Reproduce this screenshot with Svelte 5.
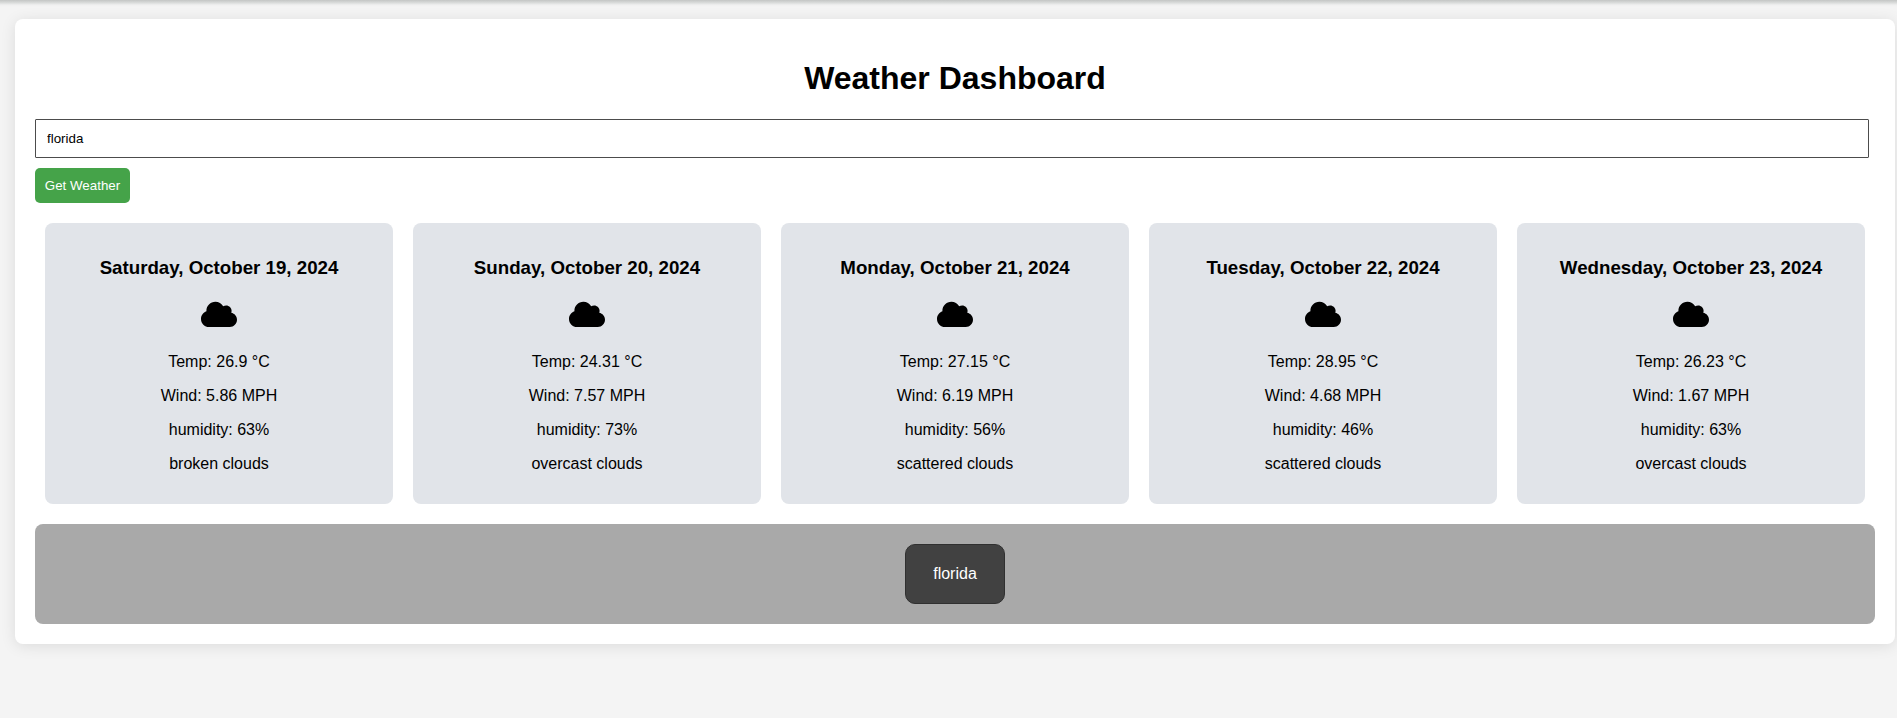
<script>
  const days = [
    { date: 'Saturday, October 19, 2024', temp: '26.9', wind: '5.86', humidity: 63, sky: 'broken clouds' },
    { date: 'Sunday, October 20, 2024', temp: '24.31', wind: '7.57', humidity: 73, sky: 'overcast clouds' },
    { date: 'Monday, October 21, 2024', temp: '27.15', wind: '6.19', humidity: 56, sky: 'scattered clouds' },
    { date: 'Tuesday, October 22, 2024', temp: '28.95', wind: '4.68', humidity: 46, sky: 'scattered clouds' },
    { date: 'Wednesday, October 23, 2024', temp: '26.23', wind: '1.67', humidity: 63, sky: 'overcast clouds' }
  ];
  let city = $state('florida');
  let history = $state(['florida']);
</script>

<div class="page">
  <main class="container">
    <h1>Weather Dashboard</h1>
    <input type="text" bind:value={city} aria-label="City" />
    <button class="search">Get Weather</button>
    <section class="forecast">
      {#each days as day}
        <article class="card">
          <h3>{day.date}</h3>
          <div class="icon">
            <svg viewBox="0 0 640 512" width="36" height="28.8" aria-hidden="true">
              <path d="M0 336c0 79.5 64.5 144 144 144H512c70.7 0 128-57.3 128-128c0-61.9-44-113.6-102.4-125.4c4.1-10.7 6.4-22.4 6.4-34.6c0-53-43-96-96-96c-19.7 0-38.1 6-53.3 16.2C367 64.2 315.3 32 256 32C167.6 32 96 103.6 96 192c0 2.7 .1 5.4 .2 8.1C40.2 219.8 0 273.2 0 336z" />
            </svg>
          </div>
          <p>Temp: {day.temp} °C</p>
          <p>Wind: {day.wind} MPH</p>
          <p>humidity: {day.humidity}%</p>
          <p>{day.sky}</p>
        </article>
      {/each}
    </section>
    <section class="history">
      {#each history as item}
        <button class="past">{item}</button>
      {/each}
    </section>
  </main>
</div>

<style>
  :global(body) {
    margin: 0;
    background: #f4f4f4;
    font-family: Arial, "Liberation Sans", sans-serif;
  }
  .page {
    box-sizing: border-box;
    height: 718px;
    padding: 19px 2px 0 15px;
    background: linear-gradient(#c3c5c4, #dcdedd 3px, #f0f0f0 5px, #f4f4f4 7px);
  }
  .container {
    box-sizing: border-box;
    display: flex;
    flex-direction: column;
    align-items: flex-start;
    height: 625px;
    padding: 20px;
    border-radius: 8px;
    background: #fff;
    box-shadow: 0 2px 15px rgba(0, 0, 0, 0.1);
  }
  h1 {
    align-self: stretch;
    margin: 21px 0 22px;
    font-size: 32px;
    line-height: 37px;
    text-align: center;
  }
  input {
    box-sizing: border-box;
    width: calc(100% - 6px);
    height: 39px;
    padding: 0 11px;
    border: 1px solid #4c4c4c;
    border-radius: 1px;
    background: #fff;
    color: #000;
    font: 13.333px Arial, "Liberation Sans", sans-serif;
    outline: none;
  }
  .search {
    width: 95px;
    height: 35px;
    margin-top: 10px;
    padding: 0;
    border: 0;
    border-radius: 5px;
    background: #45a349;
    color: #fff;
    font: 13.333px Arial, "Liberation Sans", sans-serif;
  }
  .forecast {
    align-self: stretch;
    display: grid;
    grid-template-columns: repeat(5, 1fr);
    gap: 20px;
    margin: 20px 10px;
  }
  .card {
    box-sizing: border-box;
    height: 281px;
    padding: 15px;
    border-radius: 8px;
    background: #e1e4e9;
    text-align: center;
  }
  h3 {
    margin: 18.72px 0;
    font-size: 18.72px;
    line-height: 21px;
  }
  .icon {
    height: 40.2px;
    padding-top: 4px;
    box-sizing: border-box;
  }
  svg {
    display: block;
    margin: 0 auto;
  }
  p {
    margin: 16px 0;
    font-size: 16px;
    line-height: 18px;
  }
  .history {
    align-self: stretch;
    box-sizing: border-box;
    display: flex;
    justify-content: center;
    height: 100px;
    padding: 20px;
    border-radius: 8px;
    background: #a9a9a9;
  }
  .past {
    width: 100px;
    height: 60px;
    padding: 0;
    border: 1px solid #303030;
    border-radius: 10px;
    background: #414141;
    color: #fff;
    font: 16px Arial, "Liberation Sans", sans-serif;
  }
</style>
